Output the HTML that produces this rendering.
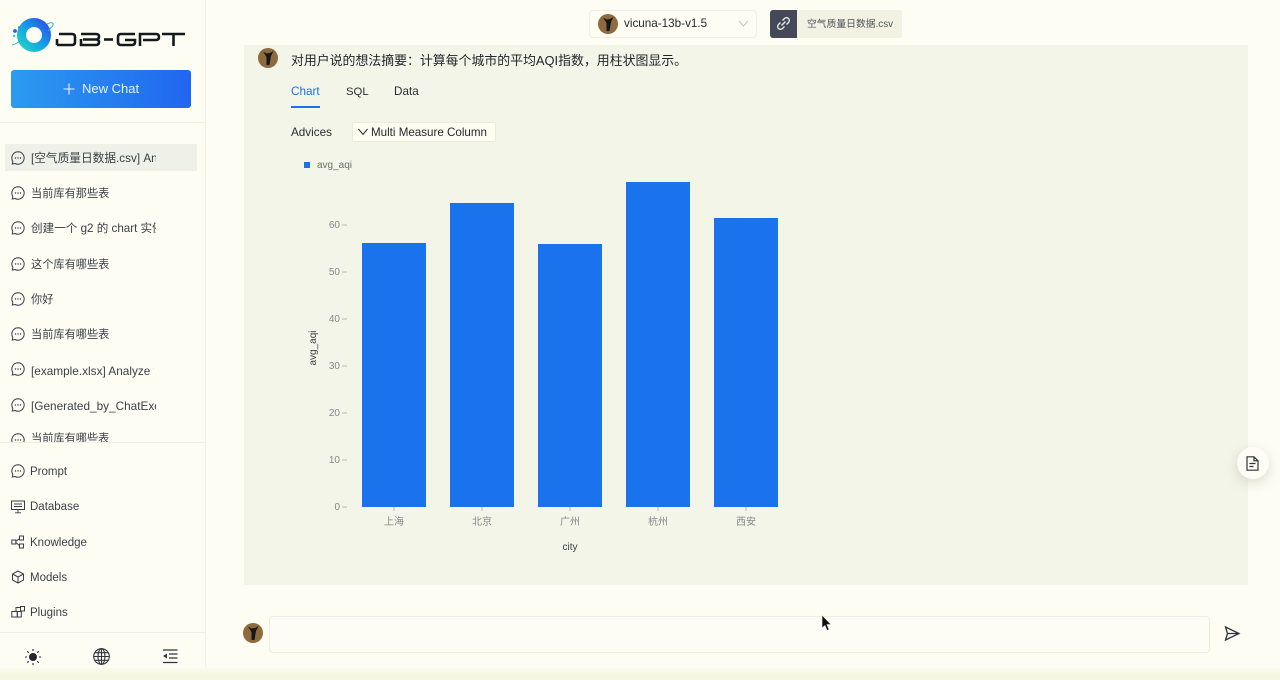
<!DOCTYPE html>
<html><head><meta charset="utf-8">
<style>
*{box-sizing:border-box}
html,body{margin:0;padding:0}
body{width:1280px;height:680px;overflow:hidden;position:relative;background:#fdfdf4;font-family:"Liberation Sans","Noto Sans CJK SC",sans-serif;color:#2b2f38}
.a{position:absolute}
.t{position:absolute;white-space:nowrap;overflow:hidden}
.side{font-size:11.200px;color:#3c4048;line-height:16px}
.nav{font-size:11.500px;color:#3c4048;line-height:16px}
svg{position:absolute;overflow:visible}
</style></head><body>
<div class="a" style="left:0;top:668px;width:1280px;height:12px;background:linear-gradient(#fbfbee,#f6f7e3 50%,#f6f7e3)"></div>
<div class="a" style="left:205px;top:0;width:1px;height:668px;background:#f1f1e6"></div>
<div class="a" style="left:244px;top:45px;width:1004px;height:540px;background:#f3f5e9"></div>
<div class="a" style="left:0;top:122px;width:205px;height:1px;background:#f0f0e2"></div>
<div class="a" style="left:0;top:442px;width:205px;height:1px;background:#eeeee2"></div>
<div class="a" style="left:0;top:632px;width:205px;height:1px;background:#eeeee6"></div>

<!-- logo -->
<svg style="left:10px;top:15px" width="180" height="40" viewBox="0 0 180 40">
<defs><linearGradient id="lg" x1="0" y1="1" x2="1" y2="0"><stop offset="0" stop-color="#1fd0c8"/><stop offset=".5" stop-color="#159de8"/><stop offset="1" stop-color="#2a55e5"/></linearGradient></defs>
<circle cx="24" cy="20" r="12.500" fill="none" stroke="url(#lg)" stroke-width="9"/>
<path d="M2 30C6 29 9 27 12 25M37 9C41 7 44 7.500 43 10C42 12 40 14 38 16" fill="none" stroke="#1fb5e0" stroke-width="1"/>
<circle cx="5" cy="16" r="1.900" fill="#3a5bd8"/><circle cx="9" cy="12.500" r="1.200" fill="#3a8bd8"/><circle cx="4" cy="21" r="1.200" fill="#2ad0d0"/>
<g fill="none" stroke="#15181d" stroke-width="2.600">
<path d="M47 30H62Q65 30 65 27V22Q65 19 62 19H49M47 30V24"/>
<path d="M71 19H86Q89 19 89 21.500Q89 24.500 86 24.500H73M86 24.500Q89 24.500 89 27Q89 30 86 30H71V24"/>
<path d="M94 24.500H103"/>
<path d="M125 19H111Q108 19 108 22V27Q108 30 111 30H122Q125 30 125 27V25H115"/>
<path d="M130 31V19H146Q149 19 149 22Q149 25 146 25H133"/>
<path d="M152 19H175M163.500 19V31"/>
</g>
</svg>

<!-- new chat -->
<div class="a" style="left:11px;top:70px;width:180px;height:38px;border-radius:3px;background:linear-gradient(90deg,#2b9bf0,#2166f0)"></div>
<svg style="left:63px;top:83px" width="12" height="12"><path d="M6 .5V11.500M.5 6H11.500" stroke="#e8f2ff" stroke-width="1.100"/></svg>
<div class="t" style="left:82px;top:81px;font-size:13px;line-height:16px;color:#e8f2ff">New Chat</div>

<!-- history -->
<div class="a" style="left:5px;top:144px;width:192px;height:27px;background:#eff0e8"></div>
<svg width="0" height="0"><defs><g id="c"><path d="M7 .8A6.200 6.200 0 1 1 4.100 12.500L1.300 13 1.800 10.300A6.200 6.200 0 0 1 7 .8Z" fill="none" stroke="#3a3e48" stroke-width="1"/><circle cx="4.500" cy="7" r=".7" fill="#3a3e48"/><circle cx="7" cy="7" r=".7" fill="#3a3e48"/><circle cx="9.500" cy="7" r=".7" fill="#3a3e48"/></g></defs></svg>
<svg style="left:11px;top:151px" width="14" height="14"><use href="#c"/></svg>
<div class="t side" style="left:31px;top:151px;width:125px;font-size:11.700px">[空气质量日数据.csv] An</div>
<svg style="left:11px;top:186px" width="14" height="14"><use href="#c"/></svg>
<div class="t side" style="left:31px;top:186px;width:125px">当前库有那些表</div>
<svg style="left:11px;top:221px" width="14" height="14"><use href="#c"/></svg>
<div class="t side" style="left:31px;top:221px;width:125px;font-size:11.600px">创建一个 g2 的 chart 实例</div>
<svg style="left:11px;top:257px" width="14" height="14"><use href="#c"/></svg>
<div class="t side" style="left:31px;top:257px;width:125px">这个库有哪些表</div>
<svg style="left:11px;top:292px" width="14" height="14"><use href="#c"/></svg>
<div class="t side" style="left:31px;top:292px;width:125px">你好</div>
<svg style="left:11px;top:327px" width="14" height="14"><use href="#c"/></svg>
<div class="t side" style="left:31px;top:327px;width:125px">当前库有哪些表</div>
<svg style="left:11px;top:362px" width="14" height="14"><use href="#c"/></svg>
<div class="t side" style="left:31px;top:363px;width:123px;font-size:11.800px">[example.xlsx] Analyze the</div>
<svg style="left:11px;top:398px" width="14" height="14"><use href="#c"/></svg>
<div class="t side" style="left:31px;top:398px;width:125px;font-size:11.800px">[Generated_by_ChatExcel</div>
<div class="a" style="left:0;top:430px;width:205px;height:12px;overflow:hidden">
<svg style="left:11px;top:3px" width="14" height="14"><use href="#c"/></svg>
<div class="t side" style="left:31px;top:1px;width:125px">当前库有哪些表</div>
</div>

<!-- nav -->
<svg style="left:11px;top:464px" width="14" height="14"><use href="#c"/></svg>
<div class="t nav" style="left:30px;top:464px">Prompt</div>
<svg style="left:11px;top:500px" width="14" height="14" viewBox="0 0 14 14" fill="none" stroke="#3a3e48"><rect x=".5" y="1" width="13" height="8.500"/><path d="M7 9.500V12.500M4 12.800H10M3 4H11M3 6.500H11" stroke-width=".9"/></svg>
<div class="t nav" style="left:30px;top:499px">Database</div>
<svg style="left:11px;top:535px" width="14" height="14" viewBox="0 0 14 14" fill="none" stroke="#3a3e48"><rect x=".8" y="5" width="4" height="4"/><rect x="8.500" y="1" width="4" height="4"/><rect x="8.500" y="9" width="4" height="4"/><path d="M4.800 6.500L8.500 3.500M4.800 7.500L8.500 10.500"/></svg>
<div class="t nav" style="left:30px;top:535px">Knowledge</div>
<svg style="left:11px;top:570px" width="14" height="14" viewBox="0 0 14 14" fill="none" stroke="#3a3e48"><path d="M7 1L12.500 4V10L7 13 1.500 10V4ZM1.500 4L7 7 12.500 4M7 7V13"/></svg>
<div class="t nav" style="left:30px;top:570px">Models</div>
<svg style="left:11px;top:605px" width="14" height="14" viewBox="0 0 14 14" fill="none" stroke="#3a3e48"><rect x=".8" y="6.500" width="5.500" height="5.500"/><rect x="6.300" y="6.500" width="4" height="5.500"/><rect x="5" y="2.500" width="4.500" height="4"/><rect x="9.500" y="1.500" width="4" height="4.500"/></svg>
<div class="t nav" style="left:30px;top:605px">Plugins</div>

<!-- bottom icons -->
<svg style="left:25px;top:649px" width="16" height="16" viewBox="0 0 16 16"><circle cx="8" cy="8" r="4" fill="#24272e"/><path d="M8 0V2M8 14V16M0 8H2M14 8H16M2.300 2.300L3.700 3.700M12.300 12.300L13.700 13.700M2.300 13.700L3.700 12.300M12.300 3.700L13.700 2.300" stroke="#24272e" stroke-width="1.100"/></svg>
<svg style="left:93px;top:648px" width="17" height="17" viewBox="0 0 17 17" fill="none" stroke="#30343c" stroke-width="1.100"><circle cx="8.500" cy="8.500" r="7.800"/><ellipse cx="8.500" cy="8.500" rx="3.500" ry="7.800"/><path d="M8.500 .7V16.300M.7 8.500H16.300M1.800 4.700H15.200M1.800 12.300H15.200"/></svg>
<svg style="left:162px;top:649px" width="16" height="15" viewBox="0 0 16 15" fill="none" stroke="#30343c" stroke-width="1.300"><path d="M1 1H15.500M7 5H15.500M7 9H15.500M1 13.500H15.500"/><path d="M5 4.500V9.500L1 7Z" fill="#30343c" stroke="none"/></svg>

<!-- header -->
<div class="a" style="left:589px;top:10px;width:168px;height:28px;border:1px solid #f0f0de;border-radius:4px;background:#fdfdf4"></div>
<svg width="0" height="0"><defs><g id="av"><circle cx="10" cy="10" r="10" fill="#8f6a3d"/><path d="M5 3.500L8.500 5.500 12 5 15.500 3 13 8 11.500 17 8.500 17 8.500 9Z" fill="#16171a"/></g></defs></svg>
<svg style="left:598px;top:14px" width="20" height="20"><use href="#av"/></svg>
<div class="t" style="left:624px;top:15px;font-size:11.700px;line-height:17px;color:#25282f">vicuna-13b-v1.5</div>
<svg style="left:738px;top:20px" width="11" height="7"><path d="M1 1L5.500 6 10 1" fill="none" stroke="#c2c4bb" stroke-width="1"/></svg>
<div class="a" style="left:770px;top:10px;width:132px;height:28px;border-radius:3px;background:#f1f2e2"></div>
<div class="a" style="left:770px;top:10px;width:27px;height:28px;border-radius:3px 0 0 3px;background:#444858"></div>
<svg style="left:776px;top:16px" width="15" height="15" viewBox="0 0 15 15" fill="none" stroke="#eef0e4" stroke-width="1.300"><path d="M6.500 4.500L8.500 2.500A2.700 2.700 0 0 1 12.500 6.500L10.500 8.500M8.500 10.500L6.500 12.500A2.700 2.700 0 0 1 2.500 8.500L4.500 6.500M5.500 9.500L9.500 5.500"/></svg>
<div class="t" style="left:807px;top:17px;font-size:9.800px;line-height:15px;color:#50535a">空气质量日数据.csv</div>

<!-- message -->
<svg style="left:258px;top:48px" width="20" height="20"><use href="#av"/></svg>
<div class="t" style="left:291px;top:52px;font-size:12.900px;line-height:18px;color:#22252c">对用户说的想法摘要：计算每个城市的平均AQI指数，用柱状图显示。</div>
<div class="t" style="left:291px;top:84px;font-size:11.700px;line-height:16px;color:#1f6ff0">Chart</div>
<div class="a" style="left:291px;top:106px;width:29px;height:2px;background:#1f6ff0"></div>
<div class="t" style="left:346px;top:84px;font-size:11.300px;line-height:16px;color:#2a2d35">SQL</div>
<div class="t" style="left:394px;top:84px;font-size:11.700px;line-height:16px;color:#2a2d35">Data</div>
<div class="t" style="left:291px;top:125px;font-size:11.700px;line-height:16px;color:#2a2d35">Advices</div>
<div class="a" style="left:352px;top:122px;width:144px;height:20px;border:1px solid #ecedd8;border-radius:2px;background:#fdfdf2"></div>
<svg style="left:358px;top:128px" width="10" height="8"><path d="M.5 1L5 6.500 9.500 1" fill="none" stroke="#25282f" stroke-width="1"/></svg>
<div class="t" style="left:371px;top:125px;font-size:11.600px;line-height:16px;color:#25282f">Multi Measure Column</div>

<!-- chart -->
<div class="a" style="left:304px;top:162px;width:6px;height:6px;background:#1a73e8"></div>
<div class="t" style="left:317px;top:159px;font-size:10px;line-height:14px;color:#6a6d70">avg_aqi</div>
<div class="a" style="left:362px;top:243px;width:64px;height:264px;background:#1a73ec"></div>
<div class="a" style="left:450px;top:203px;width:64px;height:304px;background:#1a73ec"></div>
<div class="a" style="left:538px;top:244px;width:64px;height:263px;background:#1a73ec"></div>
<div class="a" style="left:626px;top:182px;width:64px;height:325px;background:#1a73ec"></div>
<div class="a" style="left:714px;top:218px;width:64px;height:289px;background:#1a73ec"></div>
<svg style="left:0;top:0" width="1280" height="680">
<g stroke="#b8bab4" stroke-width="1"><path d="M342 507H347M342 460H347M342 413H347M342 366H347M342 319H347M342 272H347M342 225H347M394 507V511M482 507V511M570 507V511M658 507V511M746 507V511"/></g>
<g font-family="Liberation Sans,sans-serif" font-size="10" fill="#85888a" text-anchor="end">
<text x="340" y="510">0</text><text x="340" y="463">10</text><text x="340" y="416">20</text><text x="340" y="369">30</text><text x="340" y="322">40</text><text x="340" y="275">50</text><text x="340" y="228">60</text></g>
<g font-family="Liberation Sans,Noto Sans CJK SC,sans-serif" font-size="10" fill="#85888a" text-anchor="middle">
<text x="394" y="525">上海</text><text x="482" y="525">北京</text><text x="570" y="525">广州</text><text x="658" y="525">杭州</text><text x="746" y="525">西安</text></g>
<text x="570" y="550" font-family="Liberation Sans,sans-serif" font-size="10" fill="#3a3d42" text-anchor="middle">city</text>
<text x="316" y="348" font-family="Liberation Sans,sans-serif" font-size="10" fill="#3a3d42" text-anchor="middle" transform="rotate(-90 316 348)">avg_aqi</text>
</svg>

<!-- floating doc -->
<div class="a" style="left:1237px;top:447px;width:32px;height:32px;border-radius:50%;background:#fdfdf6;box-shadow:0 4px 12px rgba(120,120,90,.25)"></div>
<svg style="left:1246px;top:456px" width="13" height="15" viewBox="0 0 13 15" fill="none" stroke="#2f323a" stroke-width="1.200"><path d="M1 .8H8L12 4.800V14.200H1ZM8 .8V4.800H12M3.500 7.500H9.500M3.500 10.500H7.500"/></svg>

<!-- input -->
<svg style="left:243px;top:623px" width="20" height="20"><use href="#av"/></svg>
<div class="a" style="left:269px;top:616px;width:941px;height:37px;border:1px solid #eeeedd;border-radius:4px;background:#fdfdf5"></div>
<svg style="left:1224px;top:626px" width="16" height="15" viewBox="0 0 16 15" fill="none" stroke="#2f323a" stroke-width="1.300"><path d="M1.500 1L15 7.500 1.500 14 3.500 7.500ZM3.500 7.500H15"/></svg>
<!-- cursor -->
<svg style="left:821px;top:614px" width="11" height="18" viewBox="0 0 11 18"><path d="M1 1V14L4 11.500 6 16.500 8 15.500 6 10.500H10Z" fill="#111" stroke="#eee" stroke-width=".6"/></svg>
</body></html>
